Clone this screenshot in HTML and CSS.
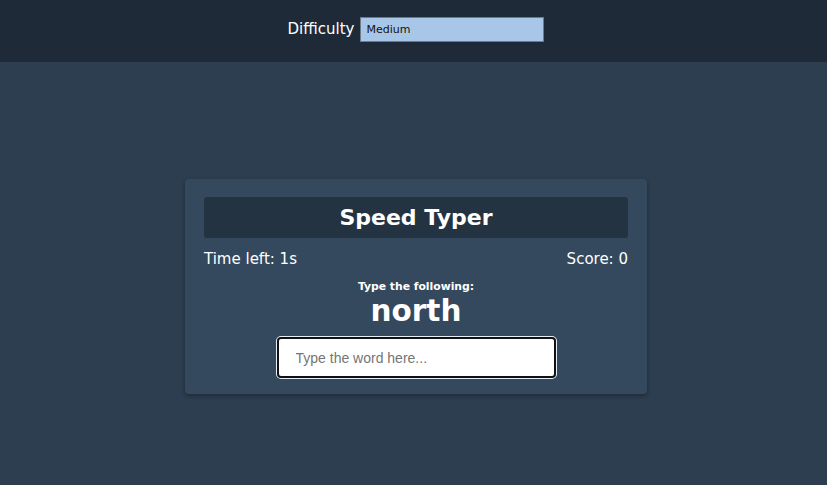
FILE: index.html
```html
<!DOCTYPE html>
<html>
<head>
<meta charset="utf-8">
<link rel="stylesheet" href="styles.css">
</head>
<body>
<header class="settings">
  <label class="diff-label" for="difficulty">Difficulty</label>
  <select id="difficulty" class="diff-select">
    <option>Easy</option>
    <option selected>Medium</option>
    <option>Hard</option>
  </select>
</header>
<main class="stage">
  <section class="card">
    <h1 class="title">Speed Typer</h1>
    <div class="stats">
      <span>Time left: 1s</span>
      <span>Score: 0</span>
    </div>
    <p class="prompt">Type the following:</p>
    <p class="word">north</p>
    <input class="entry" type="text" placeholder="Type the word here..." autofocus>
  </section>
</main>
</body>
</html>
```
FILE: styles.css
```css
* { box-sizing: border-box; }
html, body { margin: 0; padding: 0; }
body {
  background: #2c3e50;
  color: #fff;
  font-family: "DejaVu Sans", Verdana, sans-serif;
  height: 485px;
  overflow: hidden;
}
.settings {
  height: 62px;
  background: #1f2a38;
  display: flex;
  align-items: center;
  justify-content: center;
  gap: 6px;
  padding-left: 5px;
  padding-bottom: 4px;
}
.diff-label {
  font-size: 15px;
  color: #fff;
}
.diff-select {
  -webkit-appearance: none;
  appearance: none;
  width: 184px;
  height: 25px;
  background: #a8c7e8;
  border: 1px solid #6d7a88;
  border-radius: 0;
  color: #111;
  font-family: "DejaVu Sans", Verdana, sans-serif;
  font-size: 11px;
  padding: 0 5px;
}
.stage {
  display: flex;
  justify-content: center;
  padding-top: 117px;
  padding-left: 5px;
}
.card {
  width: 462px;
  background: #34495e;
  border-radius: 4px;
  box-shadow: 0 2px 4px rgba(0,0,0,0.3);
  padding: 18px 19px 16px;
  display: flex;
  flex-direction: column;
  align-items: center;
}
.title {
  width: 100%;
  margin: 0;
  height: 41px;
  background: #243342;
  border-radius: 3px;
  font-size: 22px;
  font-weight: bold;
  display: flex;
  align-items: center;
  justify-content: center;
}
.stats {
  width: 100%;
  display: flex;
  justify-content: space-between;
  font-size: 15px;
  margin-top: 12px;
  line-height: 18px;
}
.prompt {
  margin: 12px 0 0;
  font-size: 10.8px;
  font-weight: bold;
  line-height: 14px;
}
.word {
  margin: 0;
  font-size: 29.5px;
  font-weight: bold;
  line-height: 34px;
}
.entry {
  margin-top: 9px;
  width: 279px;
  height: 41px;
  border: 2px solid #111;
  border-radius: 4px;
  background: #fff;
  box-shadow: 0 0 0 1px #e8eef5;
  outline: none;
  padding: 0 17px;
  font-family: "Liberation Sans", Arial, sans-serif;
  font-size: 14px;
  color: #222;
}
.entry::placeholder { color: #757575; }
```
